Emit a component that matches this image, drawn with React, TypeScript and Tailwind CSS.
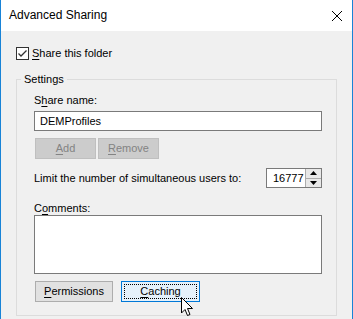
import React from "react";

function U({ children }: { children: React.ReactNode }) {
  return <span className="underline underline-offset-[2px]">{children}</span>;
}

export default function App() {
  return (
    <div
      className="w-[353px] h-[319px] overflow-hidden bg-[#f0f0f0] border-x border-[#1883d7] text-[11px] leading-[15px] text-black"
      style={{ fontFamily: '"Liberation Sans", Arial, sans-serif' }}
    >
      {/* Title bar */}
      <div className="h-[31px] bg-white flex items-center justify-between pl-[8px] pr-[8px]">
        <span className="text-[12px] leading-[16px] pb-[1px]">Advanced Sharing</span>
        <svg width="12" height="12" viewBox="0 0 12 12" className="mr-[1px]">
          <path d="M1 1 L11 11 M11 1 L1 11" stroke="#000" strokeWidth="1" />
        </svg>
      </div>

      <div className="pl-[15px] pr-[15px]">
        {/* checkbox */}
        <div className="flex items-center mt-[16px] h-[13px]">
          <div className="w-[13px] h-[13px] border border-[#333] bg-white flex items-center justify-center">
            <svg width="11" height="11" viewBox="0 0 11 11">
              <path d="M1.5 5.5 L4 8 L9.5 2.5" stroke="#333" strokeWidth="1.3" fill="none" />
            </svg>
          </div>
          <span className="ml-[3px] whitespace-nowrap">
            <U>S</U>hare this folder
          </span>
        </div>

        {/* group box */}
        <fieldset className="mt-[11px] border border-[#dcdcdc] h-[245px] px-[4px]">
          <legend className="px-[3px] leading-[16px]">Settings</legend>
          <div className="pl-[13px] pr-[10px]">
            <div className="mt-[6px]">
              S<U>h</U>are name:
            </div>
            <div className="mt-[3px] h-[20px] border border-[#7a7a7a] bg-white flex items-center pl-[5px]">
              DEMProfiles
            </div>
            <div className="flex gap-[2px] mt-[7px] pl-[1px]">
              <div className="w-[61px] h-[21px] bg-[#cccccc] border border-[#bfbfbf] text-[#838383] flex items-center justify-center">
                <U>A</U>dd
              </div>
              <div className="w-[61px] h-[21px] bg-[#cccccc] border border-[#bfbfbf] text-[#838383] flex items-center justify-center">
                <U>R</U>emove
              </div>
            </div>
            <div className="flex items-center justify-between mt-[9px] h-[20px]">
              <span className="whitespace-nowrap">Limit the number of simultaneous users to:</span>
              <div className="flex h-[20px] w-[56px] border border-[#7a7a7a] bg-white">
                <div className="flex-1 flex items-center pl-[6px] overflow-hidden whitespace-nowrap">16777</div>
                <div className="w-[16px] flex flex-col border-l border-[#acacac]">
                  <div className="flex-1 bg-[#e8e8e8] flex items-center justify-center border-b border-[#acacac]">
                    <svg width="7" height="4" viewBox="0 0 7 4">
                      <path d="M0 4 L3.5 0 L7 4 Z" fill="#000" />
                    </svg>
                  </div>
                  <div className="flex-1 bg-[#e8e8e8] flex items-center justify-center">
                    <svg width="7" height="4" viewBox="0 0 7 4">
                      <path d="M0 0 L3.5 4 L7 0 Z" fill="#000" />
                    </svg>
                  </div>
                </div>
              </div>
            </div>
            <div className="mt-[13px] h-[14px]">
              C<U>o</U>mments:
            </div>
            <div className="mt-0 h-[59px] border border-[#7a7a7a] bg-white" />
            <div className="flex gap-[8px] mt-[7px] pl-[1px]">
              <div className="w-[78px] h-[21px] bg-[#e1e1e1] border border-[#adadad] flex items-center justify-center">
                <U>P</U>ermissions
              </div>
              <div className="relative w-[79px] h-[21px] bg-[#e5f1fb] border border-[#0078d7] flex items-center justify-center p-[2px]">
                <div className="w-full h-full border border-dotted border-black flex items-center justify-center">
                  <U>C</U>aching
                </div>
                {/* mouse cursor */}
                <svg
                  width="14"
                  height="22"
                  viewBox="0 0 14 22"
                  className="absolute left-[58px] top-[14px]"
                >
                  <path
                    d="M1.5 1.5 L1.5 17 L5 13.5 L7.5 19.5 L10 18.5 L7.5 12.5 L12.5 12.5 Z"
                    fill="#fff"
                    stroke="#000"
                    strokeWidth="1"
                    strokeLinejoin="miter"
                  />
                </svg>
              </div>
            </div>
          </div>
        </fieldset>
      </div>
    </div>
  );
}
